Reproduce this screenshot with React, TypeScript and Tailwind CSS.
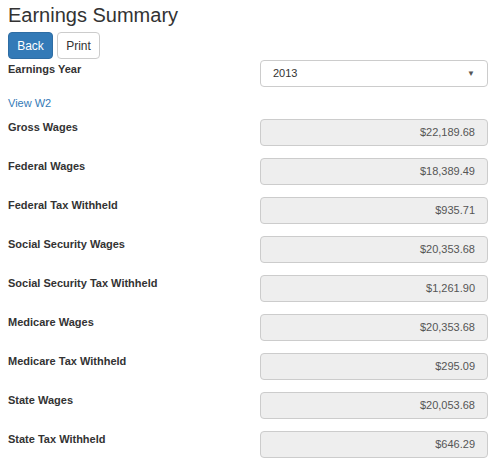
export default function App() {
  const rows: [string, string][] = [
    ["Gross Wages", "$22,189.68"],
    ["Federal Wages", "$18,389.49"],
    ["Federal Tax Withheld", "$935.71"],
    ["Social Security Wages", "$20,353.68"],
    ["Social Security Tax Withheld", "$1,261.90"],
    ["Medicare Wages", "$20,353.68"],
    ["Medicare Tax Withheld", "$295.09"],
    ["State Wages", "$20,053.68"],
    ["State Tax Withheld", "$646.29"],
  ];
  return (
    <div className="w-[500px] h-[463px] bg-white px-2 text-[#333] overflow-hidden" style={{ fontFamily: '"Liberation Sans", Arial, sans-serif' }}>
      <h1 className="text-[20px] leading-[28px] pt-[1px] h-[32px]">Earnings Summary</h1>
      <div className="flex gap-1">
        <button className="h-[27px] w-[45px] rounded-[4px] bg-[#337ab7] border border-[#2e6da4] text-white text-[12px]">Back</button>
        <button className="h-[27px] w-[43px] rounded-[4px] bg-white border border-[#ccc] text-[#333] text-[12px]">Print</button>
      </div>
      <div className="flex items-start">
        <div className="w-[252px] text-[11px] font-bold leading-[14px] pt-[3px]">Earnings Year</div>
        <div className="w-[228px] h-[27px] rounded-[4px] border border-[#ccc] flex items-center justify-between px-3 text-[11px] mt-[1px]">
          <span>2013</span>
          <span className="text-[8px] text-[#555]">▼</span>
        </div>
      </div>
      <div className="h-[32px] flex items-center pt-[1px] text-[11px] text-[#337ab7]">View W2</div>
      {rows.map(([l, v]) => (
        <div key={l} className="flex items-start h-[39px]">
          <div className="w-[252px] text-[11px] font-bold leading-[14px] pt-[1px]">{l}</div>
          <div className="w-[228px] h-[27px] rounded-[4px] border border-[#ccc] bg-[#eee] flex items-center justify-end px-3 text-[11px] text-[#555]">{v}</div>
        </div>
      ))}
    </div>
  );
}
